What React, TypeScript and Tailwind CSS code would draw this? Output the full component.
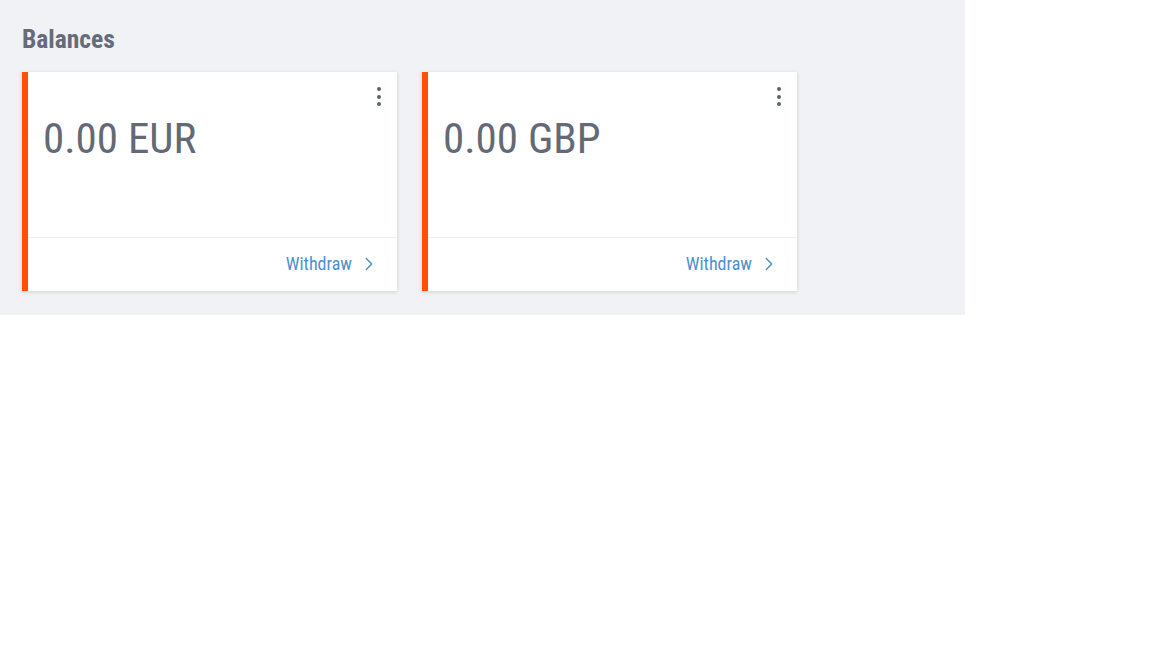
const font = { fontFamily: "Roboto, 'Noto Sans', sans-serif", fontStretch: "87.5%" } as const;

function Dots() {
  return (
    <div className="absolute right-[16px] top-[15px] flex flex-col gap-[3.5px]">
      <span className="block h-[4px] w-[4px] rounded-full bg-[#5b6370]" />
      <span className="block h-[4px] w-[4px] rounded-full bg-[#5b6370]" />
      <span className="block h-[4px] w-[4px] rounded-full bg-[#5b6370]" />
    </div>
  );
}

function Card({ amount }: { amount: string }) {
  return (
    <div className="relative flex h-[219px] w-[375px] flex-col border-l-[6px] border-[#ff5000] bg-white shadow-[0_1px_4px_rgba(0,0,0,0.14)]">
      <Dots />
      <div className="flex-1 pl-[15px] pt-[45px]">
        <div className="text-[43px] leading-[43px] text-[#636a76]" style={font}>
          {amount}
        </div>
      </div>
      <div className="flex h-[54px] items-center justify-end border-t border-[#eef0f3] pb-[2px] pr-[17px]">
        <span className="text-[18px] text-[#4d91ca]" style={font}>
          Withdraw
        </span>
        <svg width="22" height="22" viewBox="0 0 24 24" fill="none" stroke="#4d91ca" strokeWidth="1.6" strokeLinecap="round" strokeLinejoin="round" className="ml-[6px]">
          <path d="m9 18 6-6-6-6" />
        </svg>
      </div>
    </div>
  );
}

export default function App() {
  return (
    <div className="h-[315px] w-[965px] bg-[#f0f2f5] px-[22px] pt-[25px]">
      <h2 className="text-[25.5px] font-bold leading-[28px] text-[#656c79]" style={font}>
        Balances
      </h2>
      <div className="mt-[19px] flex gap-[25px]">
        <Card amount="0.00 EUR" />
        <Card amount="0.00 GBP" />
      </div>
    </div>
  );
}
